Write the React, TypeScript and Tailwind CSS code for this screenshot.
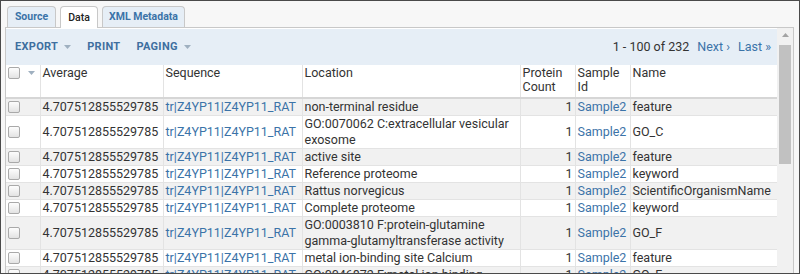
import * as React from "react";

interface Row {
  location: string[];
  name: string;
}

const ROWS: Row[] = [
  { location: ["non-terminal residue"], name: "feature" },
  { location: ["GO:0070062 C:extracellular vesicular", "exosome"], name: "GO_C" },
  { location: ["active site"], name: "feature" },
  { location: ["Reference proteome"], name: "keyword" },
  { location: ["Rattus norvegicus"], name: "ScientificOrganismName" },
  { location: ["Complete proteome"], name: "keyword" },
  { location: ["GO:0003810 F:protein-glutamine", "gamma-glutamyltransferase activity"], name: "GO_F" },
  { location: ["metal ion-binding site Calcium"], name: "feature" },
  { location: ["GO:0046872 F:metal ion binding"], name: "GO_F" },
];

function Checkbox() {
  return (
    <span className="inline-block h-[12px] w-[12px] rounded-[2px] border border-[#a9a9a9] bg-gradient-to-b from-[#fdfdfd] to-[#e3e3e3]" />
  );
}

function Caret() {
  return (
    <svg width="7" height="4" viewBox="0 0 7 4">
      <path d="M0 0 L7 0 L3.5 4 Z" fill="#9fb0c0" />
    </svg>
  );
}

export default function App() {
  return (
    <div
      className="h-[274px] w-[800px] overflow-hidden border border-[#4a4a4a] bg-[#f7f7f7] text-[12.5px] text-[#333]"
      style={{ fontFamily: "Roboto, 'Liberation Sans', sans-serif" }}
    >
      {/* Tabs */}
      <div className="flex h-[26px] items-end gap-[4px] pl-[6px] pt-[4px]">
        <div className="flex h-[21px] w-[49px] items-center justify-center rounded-t-[4px] border border-b-0 border-[#c8c8c8] bg-[#e6eef6] text-[10.5px] font-bold text-[#3b73a8]">
          Source
        </div>
        <div className="relative z-10 -mb-px flex h-[22px] w-[38px] items-center justify-center rounded-t-[4px] border border-b-0 border-[#c8c8c8] bg-white text-[10.5px] font-medium text-[#222]">
          Data
        </div>
        <div className="flex h-[21px] w-[83px] items-center justify-center rounded-t-[4px] border border-b-0 border-[#c8c8c8] bg-[#e6eef6] text-[10.5px] font-bold text-[#3b73a8]">
          XML Metadata
        </div>
      </div>

      {/* Panel */}
      <div className="ml-[4px] flex w-[789px] border border-b-0 border-[#c8c8c8] bg-white">
        <div className="w-[771px] pt-[1px]">
          {/* Toolbar */}
          <div className="flex h-[36px] items-center bg-[#e6eef6] pl-[9px] pr-[6px]">
            <span className="flex items-center gap-[6px] text-[11px] font-bold tracking-[0.3px] text-[#3e6f9f]">
              EXPORT <Caret />
            </span>
            <span className="ml-[16px] text-[11px] font-bold tracking-[0.3px] text-[#3e6f9f]">PRINT</span>
            <span className="ml-[16px] flex items-center gap-[6px] text-[11px] font-bold tracking-[0.3px] text-[#3e6f9f]">
              PAGING <Caret />
            </span>
            <div className="ml-auto flex items-center text-[12.5px]">
              <span className="text-[#333]">1 - 100 of 232</span>
              <span className="ml-[8px] text-[#3b73a8]">Next ›</span>
              <span className="ml-[8px] text-[#3b73a8]">Last »</span>
            </div>
          </div>

          {/* Grid */}
          <table className="w-[771px] table-fixed border-collapse leading-[16px]">
            <colgroup>
              <col className="w-[34px]" />
              <col className="w-[123px]" />
              <col className="w-[139px]" />
              <col className="w-[218px]" />
              <col className="w-[55px]" />
              <col className="w-[55px]" />
              <col className="w-[147px]" />
            </colgroup>
            <thead>
              <tr className="h-[33px] border-b-2 border-[#d6d6d6] bg-white align-top leading-[14px]">
                <th className="border-r border-[#e3e3e3] px-[2px] pt-[2px] text-left font-normal">
                  <div className="flex items-center gap-[8px]">
                    <Checkbox />
                    <Caret />
                  </div>
                </th>
                <th className="border-r border-[#e3e3e3] px-[2px] pt-px text-left font-normal">Average</th>
                <th className="border-r border-[#e3e3e3] px-[2px] pt-px text-left font-normal">Sequence</th>
                <th className="border-r border-[#e3e3e3] px-[2px] pt-px text-left font-normal">Location</th>
                <th className="border-r border-[#e3e3e3] px-[2px] pt-px text-left font-normal">
                  Protein
                  <br />
                  Count
                </th>
                <th className="border-r border-[#e3e3e3] px-[2px] pt-px text-left font-normal">
                  Sample
                  <br />
                  Id
                </th>
                <th className="px-[2px] pt-px text-left font-normal">Name</th>
              </tr>
            </thead>
            <tbody>
              {ROWS.map((row, i) => (
                <tr
                  key={i}
                  className={`border-b border-[#e3e3e3] align-middle ${i % 2 === 0 ? "bg-[#f1f1f1]" : "bg-white"}`}
                >
                  <td className="border-r border-[#e3e3e3] px-[2px] py-0">
                    <div className="flex h-[16px] items-center">
                      <Checkbox />
                    </div>
                  </td>
                  <td className="whitespace-nowrap border-r border-[#e3e3e3] px-[2px] py-0">4.707512855529785</td>
                  <td className="whitespace-nowrap border-r border-[#e3e3e3] px-[2px] py-0 text-[#3b73a8]">
                    tr|Z4YP11|Z4YP11_RAT
                  </td>
                  <td className="whitespace-nowrap border-r border-[#e3e3e3] px-[2px] py-0">
                    {row.location.map((l, j) => (
                      <div key={j}>{l}</div>
                    ))}
                  </td>
                  <td className="border-r border-[#e3e3e3] px-[2px] py-0 text-right">1</td>
                  <td className="border-r border-[#e3e3e3] px-[2px] py-0 text-[#3b73a8]">Sample2</td>
                  <td className="whitespace-nowrap px-[2px] py-0">{row.name}</td>
                </tr>
              ))}
            </tbody>
          </table>
        </div>

        {/* Scrollbar */}
        <div className="flex w-[16px] flex-col items-center bg-[#f1f1f1] pt-[5px]">
          <svg width="7" height="4" viewBox="0 0 7 4">
            <path d="M0 4 L7 4 L3.5 0 Z" fill="#a3a3a3" />
          </svg>
          <div className="mt-[8px] h-[119px] w-[12px] bg-[#c1c1c1]" />
        </div>
      </div>
    </div>
  );
}
